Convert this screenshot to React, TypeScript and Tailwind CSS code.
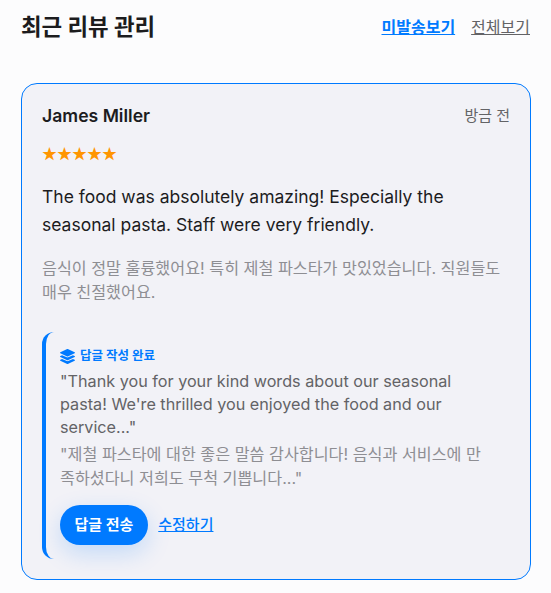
import { FaLayerGroup } from 'react-icons/fa';

export default function App() {
  return (
    <div className="min-h-[593px] bg-[#fcfcfd] px-[21px] pt-[12px] font-['Inter','Noto_Sans_CJK_KR',sans-serif]">
      <div className="flex items-center justify-between h-[30px]">
        <h2 className="text-[22.4px] font-bold leading-[30px] text-[#1c1c1e]">최근 리뷰 관리</h2>
        <div className="flex gap-[16px] text-[16px]">
          <a className="font-bold text-[#007aff] underline">미발송보기</a>
          <a className="text-[#636366] underline">전체보기</a>
        </div>
      </div>

      <div className="mt-[41px] mr-[-1px] h-[497px] rounded-[16px] border border-[#007aff] bg-[#f2f2f7] px-[20px] pt-[20px]">
        <div className="flex items-center justify-between">
          <span className="text-[17.6px] font-semibold leading-[24px] text-[#1c1c1e]">James Miller</span>
          <span className="text-[15px] leading-[24px] text-[#636366]">방금 전</span>
        </div>
        <div className="mt-[14px] font-['Noto_Sans_CJK_KR',sans-serif] text-[15px] leading-[22px] text-[#ff9500]">★★★★★</div>
        <p className="mt-[19px] text-[17.5px] leading-[28px] text-[#1c1c1e]">
          The food was absolutely amazing! Especially the seasonal pasta. Staff were very friendly.
        </p>
        <p className="mt-[17px] text-[16.2px] leading-[24px] text-[#8e8e93]">
          음식이 정말 훌륭했어요! 특히 제철 파스타가 맛있었습니다. 직원들도 매우 친절했어요.
        </p>

        <div className="mt-[28px] rounded-[12px] border-l-[4px] border-[#007aff] pl-[14px] pr-[16px] pt-[15px] pb-[14px]">
          <div className="flex items-center gap-[5px] text-[12.5px] font-bold leading-[18px] text-[#007aff]">
            <FaLayerGroup size={15} />
            <span>답글 작성 완료</span>
          </div>
          <p className="mt-[5px] text-[16.2px] leading-[23px] text-[#636366]">
            "Thank you for your kind words about our seasonal pasta! We're thrilled you enjoyed the food and our service..."
          </p>
          <p className="mt-[3px] text-[16.2px] leading-[24px] text-[#8e8e93]">
            "제철 파스타에 대한 좋은 말씀 감사합니다! 음식과 서비스에 만족하셨다니 저희도 무척 기쁩니다..."
          </p>
          <div className="mt-[15px] flex items-center gap-[10.5px]">
            <button className="h-[40px] rounded-[20px] bg-[#007aff] px-[14.5px] text-[15px] font-bold text-white shadow-[0_8px_24px_rgba(0,122,255,0.2)]">
              답글 전송
            </button>
            <a className="text-[15px] font-medium text-[#007aff] underline">수정하기</a>
          </div>
        </div>
      </div>
    </div>
  );
}
